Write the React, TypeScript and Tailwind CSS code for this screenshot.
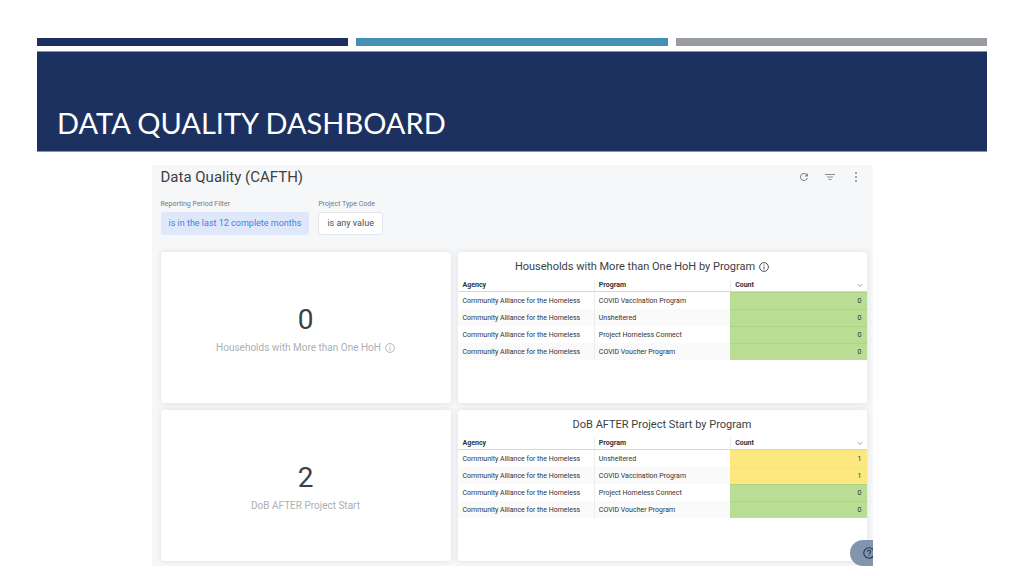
import { useState } from "react";

type Row = { program: string; count: number };

const AGENCY = "Community Alliance for the Homeless";

const householdRows: Row[] = [
  { program: "COVID Vaccination Program", count: 0 },
  { program: "Unsheltered", count: 0 },
  { program: "Project Homeless Connect", count: 0 },
  { program: "COVID Voucher Program", count: 0 },
];

const dobRows: Row[] = [
  { program: "Unsheltered", count: 1 },
  { program: "COVID Vaccination Program", count: 1 },
  { program: "Project Homeless Connect", count: 0 },
  { program: "COVID Voucher Program", count: 0 },
];

function InfoIcon() {
  return (
    <svg viewBox="0 0 20 20" className="size-[10px] shrink-0" fill="none" stroke="currentColor" strokeWidth="1.8" aria-hidden="true">
      <circle cx="10" cy="10" r="8.8" />
      <path d="M10 5v2M10 9v6" />
    </svg>
  );
}

function Metric({ value, label, info }: { value: number; label: string; info?: boolean }) {
  return (
    <section className="flex min-h-[151px] flex-col items-center rounded-[3px] bg-white pt-[52px] shadow-[0_0_6px_rgba(0,0,0,0.1)]">
      <p className="text-[28px] leading-8 text-[#3c4043]">{value}</p>
      <p className="mt-1 flex items-center gap-1 text-[10px] leading-4 text-[#adafb2]">
        {label}
        {info && <InfoIcon />}
      </p>
    </section>
  );
}

function ProgramTable({ title, rows, info }: { title: string; rows: Row[]; info?: boolean }) {
  const [descending, setDescending] = useState(true);
  const shown = descending ? rows : [...rows].reverse();
  return (
    <section className="min-h-[151px] rounded-[3px] bg-white pt-[7px] shadow-[0_0_6px_rgba(0,0,0,0.1)]">
      <h3
        className={
          info
            ? "flex items-center justify-center gap-1 pr-10 text-[11px] leading-4 text-[#3c4043]"
            : "flex items-center justify-center gap-1 text-[11px] leading-4 text-[#3c4043]"
        }
      >
        {title}
        {info && <InfoIcon />}
      </h3>
      <table className="mt-1 w-full table-fixed border-separate border-spacing-0 text-left text-[7px] text-[#303336]">
        <thead>
          <tr className="h-[13px] leading-3">
            <th className="border-b border-[#d5d9da] px-[5px] py-0 font-bold">Agency</th>
            <th className="border-b border-l border-b-[#d5d9da] border-l-[#eceeee] px-1 py-0 font-bold">Program</th>
            <th className="border-b border-l border-b-[#d5d9da] border-l-[#eceeee] px-1 py-0 font-bold">
              <button
                type="button"
                className="flex w-full items-center justify-between"
                onClick={() => setDescending(!descending)}
              >
                Count
                <svg viewBox="0 0 8 6" className="h-[5px] w-[6px]" fill="none" stroke="#85898d" aria-hidden="true">
                  <path d="M1 1l3 3.5L7 1" />
                </svg>
              </button>
            </th>
          </tr>
        </thead>
        <tbody>
          {shown.map((row) => (
            <tr key={row.program} className="h-[17px] leading-4 even:bg-[#fafafa]">
              <td className="px-[5px] py-0 whitespace-nowrap">{AGENCY}</td>
              <td className="border-l border-[#eceeee] px-1 py-0 whitespace-nowrap">{row.program}</td>
              <td
                className={
                  row.count > 0
                    ? "border-t border-[#f6e27c] bg-[#fde880] px-[5px] py-0 text-right"
                    : "border-t border-[#aed387] bg-[#b9dd92] px-[5px] py-0 text-right"
                }
              >
                {row.count}
              </td>
            </tr>
          ))}
        </tbody>
      </table>
    </section>
  );
}

export default function App() {
  return (
    <main className="min-h-screen bg-white px-[37px] pt-[38px] pb-[10px] font-['Roboto',sans-serif]">
      <div className="grid grid-cols-3 gap-2">
        <div className="h-2 bg-[#1d2e62]" />
        <div className="h-2 bg-[#468fb7]" />
        <div className="h-2 bg-[#999da1]" />
      </div>
      <header className="mt-[5px] border-y border-[#8494b0] bg-[#1c315f] px-5 pt-[53px] pb-[10px]">
        <h1 className="font-['Lato',sans-serif] text-[29px] leading-9 text-white">DATA QUALITY DASHBOARD</h1>
      </header>

      <div className="relative mx-auto mt-[13px] w-full max-w-[721px] overflow-hidden bg-[#f6f7f9] pr-[6px] pb-[5px] pl-[9px]">
        <div className="flex items-center justify-between">
          <h2 className="text-[15px] leading-6 text-[#3c4043]">Data Quality (CAFTH)</h2>
          <div className="flex items-center gap-[14px] pr-[5px] text-[#85898d]">
            <button type="button" aria-label="Refresh">
              <svg viewBox="0 0 24 24" className="size-3" fill="currentColor" aria-hidden="true">
                <path d="M17.65 6.35A8 8 0 1 0 19.73 14h-2.08A6 6 0 1 1 12 6c1.66 0 3.14.69 4.22 1.78L13 11h7V4z" />
              </svg>
            </button>
            <button type="button" aria-label="Filters">
              <svg viewBox="0 0 24 24" className="size-3" fill="currentColor" aria-hidden="true">
                <path d="M9 18h6v-2H9zM2 6v2h20V6zm4 7h12v-2H6z" />
              </svg>
            </button>
            <button type="button" aria-label="More options">
              <svg viewBox="0 0 24 24" className="size-3" fill="currentColor" aria-hidden="true">
                <circle cx="12" cy="4" r="2" />
                <circle cx="12" cy="12" r="2" />
                <circle cx="12" cy="20" r="2" />
              </svg>
            </button>
          </div>
        </div>

        <div className="mt-[9px] flex gap-[9px] text-[7px] text-[#74787c]">
          <div>
            <p id="period" className="leading-3">Reporting Period Filter</p>
            <button
              type="button"
              aria-describedby="period"
              className="mt-[2px] h-[23px] rounded-[3px] bg-[#dfe8fa] px-2 text-[9px] text-[#4281e8]"
            >
              is in the last 12 complete months
            </button>
          </div>
          <div>
            <p id="project" className="leading-3">Project Type Code</p>
            <button
              type="button"
              aria-describedby="project"
              className="mt-[2px] h-[23px] rounded-[3px] border border-[#e3e5e8] bg-white px-2 text-[9px] text-[#4b4f53]"
            >
              is any value
            </button>
          </div>
        </div>

        <div className="mt-[17px] grid grid-cols-[290fr_409fr] gap-[7px]">
          <Metric value={0} label="Households with More than One HoH" info />
          <ProgramTable title="Households with More than One HoH by Program" rows={householdRows} info />
          <Metric value={2} label="DoB AFTER Project Start" />
          <ProgramTable title="DoB AFTER Project Start by Program" rows={dobRows} />
        </div>

        <button
          type="button"
          aria-label="Help"
          className="absolute right-0 bottom-0 flex h-[26px] w-[23px] items-center justify-end overflow-hidden rounded-l-full bg-[#8395ae] text-[#26344f]"
        >
          <svg viewBox="0 0 24 24" className="-mr-[2px] size-3 shrink-0" fill="none" stroke="currentColor" strokeWidth="2.2" aria-hidden="true">
            <circle cx="12" cy="12" r="10.5" />
            <path d="M8.8 9.5a3.2 3.2 0 1 1 4.8 2.8c-1.1.7-1.6 1.2-1.6 2.4M12 16.5v2.2" />
          </svg>
        </button>
      </div>
    </main>
  );
}
